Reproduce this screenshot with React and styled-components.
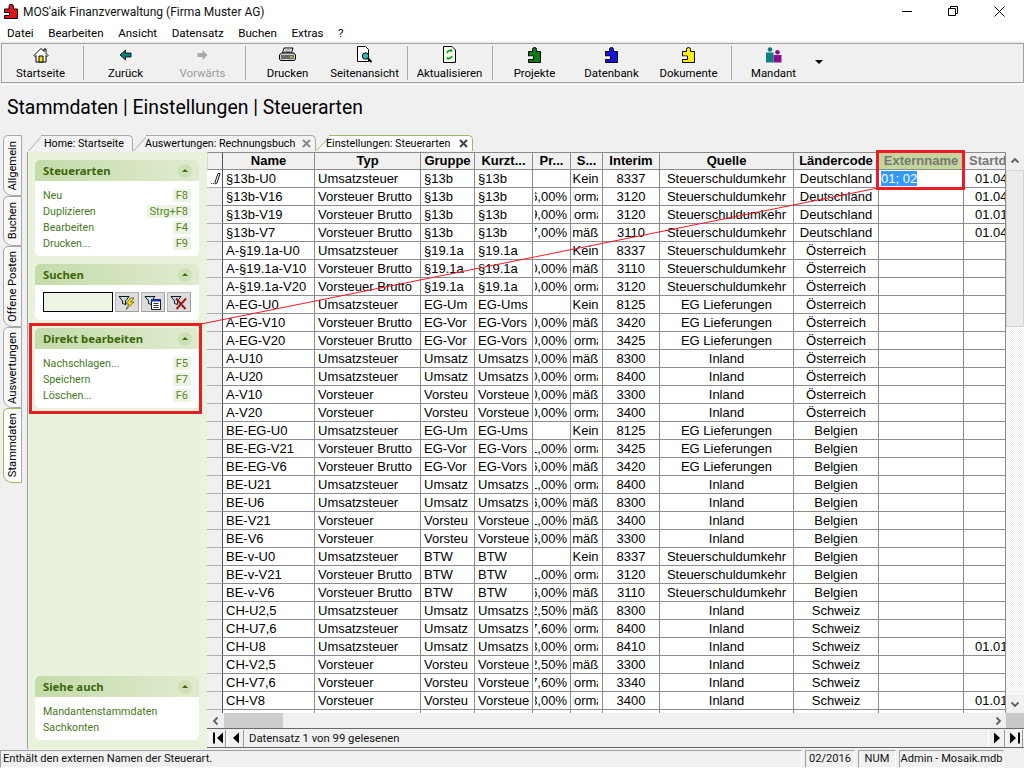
import React from 'react';
import styled, { createGlobalStyle } from 'styled-components';

const Global = createGlobalStyle`
  html, body { margin: 0; padding: 0; background: #f0f0f0; }
  * { box-sizing: border-box; }
`;

const UI = `Roboto, "Noto Sans", "Liberation Sans", sans-serif`;
const BOLD = `"Noto Sans", "Liberation Sans", sans-serif`;
const GRID = `"Liberation Sans", Arial, sans-serif`;
const RED = '#ed1c24';
const LINE = '#8c8c8c';

const Page = styled.div`
  position: relative; width: 1024px; height: 768px; overflow: hidden;
  display: flex; flex-direction: column; background: #f0f0f0;
  font: 11.3px ${UI}; color: #000;
`;
const TitleBar = styled.div`
  height: 22px; background: #fff; display: flex; align-items: center; padding: 0 2px 0 4px; flex: none;
`;
const TitleText = styled.span`
  margin-left: 5px; font-size: 12px; color: #111; flex: 1; padding-top: 2px;
`;
const WinButton = styled.span`
  width: 46px; height: 22px; display: flex; align-items: center; justify-content: center;
`;
const MenuBar = styled.div`
  height: 19px; background: #fff; display: flex; align-items: center; flex: none; padding: 3px 0 0 7px; gap: 14.5px;
`;
const MenuItem = styled.span`
  font-size: 11.6px; color: #000;
`;
const ToolWrap = styled.div`
  height: 44px; flex: none; padding: 2px 0 1px 1px; border-bottom: 1px solid #fff;
`;
const Toolbar = styled.div`
  height: 40px; border: 1px solid #a0a0a0; display: flex; align-items: stretch;
  padding: 1px 0 2px 0;
`;
const ToolButton = styled.div`
  width: 77px; display: flex; flex-direction: column; align-items: center; color: ${p => p.$off ? '#9a9a9a' : '#000'};
  font-size: 11.4px; line-height: 14px;
`;
const ToolIcon = styled.span`
  height: 20px; display: flex; align-items: center; justify-content: center; margin-bottom: 2px;
`;
const ToolSep = styled.span`
  width: 1px; background: #a8a8a8; margin: 1px 3px 0 4px;
`;
const DropArrow = styled.span`
  align-self: center; margin: 0 0 1px 3px; width: 0; height: 0;
  border-left: 4px solid transparent; border-right: 4px solid transparent; border-top: 4px solid #000;
`;
const Heading = styled.h1`
  height: 50px; flex: none; margin: 0; padding: 9px 0 0 7px;
  font: 400 19.4px/28px ${UI}; color: #000; white-space: pre;
`;
const Body = styled.div`
  flex: 1; display: flex; min-height: 0;
`;
const SideTabs = styled.div`
  width: 27px; flex: none; padding-left: 3px; display: flex; flex-direction: column;
`;
const SideTab = styled.div`
  height: ${p => p.$h}px; width: 19px; display: flex; align-items: center; justify-content: center;
  background: ${p => p.$active ? '#fff' : '#f7f7f7'};
  border: 1px solid ${p => p.$active ? '#9bbb59' : '#a8a8a8'};
  border-right-color: #a8a8a8;
  border-radius: 5px 0 0 9px;
`;
const SideLabel = styled.span`
  writing-mode: vertical-rl; transform: rotate(180deg); white-space: nowrap; font-size: 11.2px;
`;
const Main = styled.div`
  flex: 1; min-width: 0; display: flex; flex-direction: column;
`;
const TabRow = styled.div`
  height: 17px; flex: none; display: flex; padding-left: 1px; align-items: stretch;
`;
const DocTab = styled.div`
  position: relative; width: ${p => p.$w}px; height: 16px; padding-left: ${p => p.$pad}px; display: flex; align-items: center;
  font-size: 10.7px; color: #000; z-index: ${p => p.$active ? 2 : 1};
  &::before {
    content: ''; position: absolute; left: 0; top: 0; bottom: 0; width: 20px;
    background: ${p => p.$active ? '#fff' : '#f2f2f2'};
    border-left: 1px solid ${p => p.$active ? '#9bbb59' : '#a8a8a8'};
    transform: skewX(-42deg); transform-origin: bottom left; z-index: -1;
  }
  &::after {
    content: ''; position: absolute; left: 13px; right: 0; top: 0; bottom: 0;
    background: ${p => p.$active ? '#fff' : '#f2f2f2'};
    border-top: 1px solid ${p => p.$active ? '#9bbb59' : '#a8a8a8'};
    border-right: 1px solid ${p => p.$active ? '#9bbb59' : '#a8a8a8'};
    border-top-right-radius: 5px; z-index: -1;
  }
`;
const TabLabel = styled.span`
  white-space: nowrap; flex: 1;
`;
const TabClose = styled.span`
  width: 9px; margin-right: 5px; display: flex; align-items: center;
`;
const Panels = styled.div`
  flex: 1; display: flex; min-height: 0;
`;
const Sidebar = styled.aside`
  width: 180px; flex: none; background: #e9f2dd; border-left: 1px solid #a0a0a0;
  padding: 8px 8px 9px 7px; display: flex; flex-direction: column; gap: 8px;
`;
const Pane = styled.section`
  position: relative; background: #fff; border-radius: 5px; ${p => p.$bottom ? 'margin-top: auto;' : ''}
`;
const PaneHead = styled.div`
  height: 21px; border-radius: 5px 5px 0 0; padding: 0 7px 0 8px; display: flex; align-items: center; justify-content: space-between;
  background: linear-gradient(90deg, #c5dbaa, #dfebcf);
`;
const PaneTitle = styled.span`
  font: 700 11.3px ${BOLD}; color: #3b6609;
`;
const Collapse = styled.span`
  width: 14px; height: 14px; border-radius: 50%; background: #cfe0b8; display: flex; align-items: center; justify-content: center;
  &::before { content: ''; width: 0; height: 0; border-left: 3px solid transparent; border-right: 3px solid transparent; border-bottom: 3px solid #3b6609; }
`;
const PaneBody = styled.div`
  padding: 6px 8px 5px 8px;
`;
const ActionRow = styled.div`
  height: 16px; display: flex; align-items: center; justify-content: space-between; color: #47791d; font-size: 10.7px;
`;
const Shortcut = styled.span`
  background: #eef4e4; color: #55862c; height: 13px; line-height: 13px; padding: 0 3px; font-size: 11px; min-width: 18px; text-align: center;
`;
const SearchBody = styled.div`
  padding: 7px 8px 8px 8px; display: flex; gap: 2px;
`;
const SearchInput = styled.div`
  width: 70px; height: 20px; background: #eef4e4; border: 1px solid #000;
`;
const SearchButton = styled.span`
  width: 24px; height: 20px; background: #dcdcdc; border: 1px solid #b4b4b4; border-right-color: #a0a0a0; border-bottom-color: #a0a0a0;
  display: flex; align-items: center; justify-content: center;
`;
const Highlight = styled.div`
  position: absolute; border: 3px solid ${RED}; z-index: 5; pointer-events: none;
  left: ${p => p.$l}px; top: ${p => p.$t}px; width: ${p => p.$w}px; height: ${p => p.$h}px;
`;
const GridPanel = styled.div`
  flex: 1; min-width: 0; display: flex; flex-direction: column; background: #f0f0f0;
`;
const GridArea = styled.div`
  position: relative; height: 561px; flex: none; display: flex;
`;
const TableClip = styled.div`
  width: 799px; flex: none; overflow: hidden; background: #fff;
`;
const Table = styled.table`
  table-layout: fixed; border-collapse: separate; border-spacing: 0; width: 799px; font: 13px/17px ${GRID}; color: #000;
`;
const Col = styled.col`
  width: ${p => p.$w}px;
`;
const HeadCell = styled.th`
  height: 18px; padding: 0; background: ${p => p.$green ? '#c3d69b' : '#f0f0f0'}; font-weight: 700; font-size: 13px; line-height: 16px;
  border-right: 1px solid ${LINE}; border-bottom: 1px solid ${LINE}; border-top: 1px solid ${LINE};
  color: ${p => p.$muted ? '#787878' : '#000'};
  overflow: hidden; white-space: nowrap; text-align: ${p => p.$left ? 'left' : 'center'};
  padding-left: ${p => p.$left ? 5 : 0}px;
`;
const Corner = styled.th`
  padding: 0; height: 18px; line-height: 16px; background: #f0f0f0; border: 1px solid ${LINE}; border-left: 1px solid #d8d8d8; border-right-color: #555;
`;
const RowHead = styled.td`
  height: 18px; padding: 0 0 0 4px; background: ${p => p.$first ? '#fff' : '#f0f0f0'}; border-right: 1px solid #555; border-bottom: 1px solid #b0b0b0; line-height: 0;
`;
const Cell = styled.td`
  height: 18px; padding: ${p => p.$inset || '0'}; border-right: 1px solid ${LINE}; border-bottom: 1px solid ${LINE}; background: #fff; overflow: hidden;
`;
const CellText = styled.div`
  display: flex; height: 17px; white-space: nowrap; overflow: hidden; line-height: 17px;
  justify-content: ${p => p.$a === 'r' ? 'flex-end' : p.$a === 'c' ? 'center' : 'flex-start'};
  padding-left: ${p => p.$pl ?? (p.$a ? 0 : 3)}px;
`;
const Selected = styled.span`
  background: #3399ff; color: #fff; height: 15px; line-height: 15px; margin-top: 1px;
`;
const VScroll = styled.div`
  width: 18px; flex: none; display: flex; flex-direction: column;
  background: repeating-conic-gradient(#f0f0f0 0 25%, #fff 0 50%) 0 0 / 2px 2px;
`;
const ScrollBtn = styled.div`
  height: ${p => p.$h || 18}px; width: ${p => p.$w || 18}px; flex: none; background: #f0f0f0; display: flex; align-items: center; justify-content: center;
`;
const VThumb = styled.div`
  height: 157px; flex: none; background: #ececec; border: 1px solid #d4d4d4;
`;
const Spacer = styled.div`
  flex: 1;
`;
const HScroll = styled.div`
  height: 16px; flex: none; display: flex; align-items: stretch; background: #f0f0f0; border-bottom: 1px solid #696969;
`;
const HThumb = styled.div`
  width: 59px; background: #cdcdcd;
`;
const ScrollCorner = styled.div`
  width: 18px; background: #c8c8c8;
`;
const NavBar = styled.div`
  height: 19px; flex: none; display: flex; align-items: center; border-bottom: 1px solid #696969; padding-left: 2px; font-size: 11.3px;
`;
const NavButton = styled.span`
  width: 17px; height: 17px; display: flex; align-items: center; justify-content: center; margin-right: 1px;
  border-right: 1px solid #9a9a9a; border-left: 1px solid #fff;
`;
const NavText = styled.span`
  flex: 1; padding-left: 4px; color: #111;
`;
const StatusBar = styled.footer`
  height: 19px; flex: none; display: flex; gap: 3px; padding: 1px 20px 0 0; font-size: 11.1px;
`;
const StatusPanel = styled.div`
  width: ${p => p.$w ? p.$w + 'px' : 'auto'}; flex: ${p => p.$w ? 'none' : 1}; border-top: 1px solid #a0a0a0; border-left: 1px solid #a0a0a0;
  border-right: 1px solid #fff; border-bottom: 1px solid #fff; padding-left: ${p => p.$center ? 0 : 2}px; line-height: 16px; color: #111;
  text-align: ${p => p.$center ? 'center' : 'left'}; white-space: nowrap; overflow: hidden;
`;
const Overlay = styled.svg`
  position: absolute; left: 0; top: 0; width: 1024px; height: 768px; pointer-events: none; z-index: 4;
`;

const Puzzle = ({ color, dark = '#000' }) => (
  <svg width="13" height="16" viewBox="0 0 13 16">
    <path d="M4.500 4.500V2.500a2 2 0 0 1 4 0v2h4v11h-12v-3h5v-3.500h-5v-4.500z" fill={color} stroke={dark} strokeWidth="1" />
    <path d="M1 9.500h4v2h-4z" fill="#fff" />
  </svg>
);
const Logo = () => (
  <svg width="14" height="15" viewBox="0 0 14 15">
    <path d="M5 5V2.500a2.200 2.200 0 0 1 4.400 0V5h4v9.500H.5v-3h5V8.500h-5V5z" fill="#e5141b" stroke="#000" strokeWidth="1" />
    <path d="M1 9.500h3.500v1H1z" fill="#fff" />
  </svg>
);
const Home = () => (
  <svg width="16" height="16" viewBox="0 0 16 16">
    <path d="M1 8.500 8 1.500l3 3V2h2v4.500l2 2-1 1-1-1v6.500H3V8.500l-1 1z" fill="#fff" stroke="#000" />
    <path d="M6 9h4v6H6z" fill="#ffe800" stroke="#000" />
  </svg>
);
const ArrowL = ({ color = '#0a7a7a', stroke = '#000' }) => (
  <svg width="13" height="12" viewBox="0 0 13 12"><path d="M1 6 6.500 1v3H12v4H6.500v3z" fill={color} stroke={stroke} strokeWidth=".8" /></svg>
);
const ArrowR = () => (
  <svg width="11" height="12" viewBox="0 0 11 12"><path d="M10.500 6 5.500 1v3H.5v4h5v3z" fill="#a8a8a8" /></svg>
);
const Printer = () => (
  <svg width="17" height="15" viewBox="0 0 17 15">
    <path d="M5 1h9l-1.500 5h-9z" fill="#fff" stroke="#000" />
    <path d="M2.500 6h12.500l1.500 2v4l-1 1.500H1.500l-1-1.500V8z" fill="#d0d0d0" stroke="#000" />
    <path d="M2 9h13M2 11h13" stroke="#000" />
    <path d="M6 3h6M5.500 4.500h6" stroke="#555" strokeWidth=".7" />
    <path d="M11 9.500h3v1h-3z" fill="#ffe800" />
  </svg>
);
const Preview = () => (
  <svg width="17" height="17" viewBox="0 0 17 17">
    <path d="M1.500.5h8l3 3v12h-11z" fill="#fff" stroke="#000" />
    <circle cx="9.500" cy="10" r="3.200" fill="#33b5b5" stroke="#000" />
    <path d="M12 12.500 15.500 16" stroke="#000" strokeWidth="2" />
  </svg>
);
const Refresh = () => (
  <svg width="13" height="17" viewBox="0 0 13 17">
    <path d="M.5.5h8.500l3.500 3.500v12.500H.5z" fill="#f4f8ea" stroke="#000" />
    <path d="M4 7a3 3 0 0 1 5-1.500L7.500 3.500M9 10a3 3 0 0 1-5 1.500l1.500 2" fill="none" stroke="#0a9a2a" strokeWidth="1.600" />
  </svg>
);
const People = () => (
  <svg width="17" height="16" viewBox="0 0 17 16">
    <circle cx="5" cy="2.500" r="2.300" fill="#0a7f7f" />
    <path d="M1 5.500h7.500v10H1z" fill="#0a7f7f" />
    <circle cx="12.500" cy="5.200" r="2.300" fill="#8a0f8a" />
    <path d="M8.500 8h8v7.500h-8z" fill="#8a0f8a" />
  </svg>
);
const Funnel = () => <path d="M1 1.500h10L7.500 6v3.500l-3-1V6z" fill="#bfe0e0" stroke="#000" strokeWidth=".9" />;
const FilterBolt = () => (
  <svg width="18" height="15" viewBox="0 0 18 15"><Funnel /><path d="M12.500 3 8 9h3l-3 5.500L16 7h-3.500L16 3z" fill="#ffe800" stroke="#222" strokeWidth=".6" /></svg>
);
const FilterDoc = () => (
  <svg width="18" height="15" viewBox="0 0 18 15"><Funnel /><path d="M7.500 4.500h9v10h-9z" fill="#fff" stroke="#000" strokeWidth=".9" /><path d="M7.500 4.500h9v2h-9z" fill="#1c2fd0" /><path d="M9.500 8.500h5M9.500 10.500h5M9.500 12.500h5" stroke="#000" strokeWidth=".8" /></svg>
);
const FilterX = () => (
  <svg width="18" height="15" viewBox="0 0 18 15"><Funnel /><path d="M6 3.500 15.500 14M16 3.500 6.500 14" stroke="#a01a1a" strokeWidth="2" /></svg>
);
const Pencil = () => (
  <svg width="11" height="13" viewBox="0 0 11 13">
    <path d="M7 1.500h2l-3 9.500-1.700 1-.3-1.800z" fill="#fff" stroke="#000" strokeWidth=".9" />
    <path d="M0 11.500h1M2 11.500h1" stroke="#333" strokeWidth="1" />
  </svg>
);
const Chevron = ({ dir }) => {
  const d = { u: 'M1.500 6.500 5 3l3.500 3.500', d: 'M1.500 3.500 5 7l3.500-3.500', l: 'M6.500 1.500 3 5l3.500 3.500', r: 'M3.500 1.500 7 5 3.500 8.500' }[dir];
  return <svg width="10" height="10" viewBox="0 0 10 10"><path d={d} fill="none" stroke="#606060" strokeWidth="1.800" /></svg>;
};
const Close = ({ color }) => (
  <svg width="9" height="9" viewBox="0 0 9 9"><path d="M1 1l7 7M8 1 1 8" stroke={color} strokeWidth="2" /></svg>
);
const Nav = ({ dir, bar }) => (
  <svg width="12" height="12" viewBox="0 0 12 12">
    {dir === 'l' ? <path d={bar ? 'M5 6l6-5.500v11z' : 'M3 6l6-5.500v11z'} fill="#000" /> : <path d={bar ? 'M7 6 1 .5v11z' : 'M9 6 3 .5v11z'} fill="#000" />}
    {bar && <path d={dir === 'l' ? 'M1 .5h2v11H1z' : 'M9 .5h2v11H9z'} fill="#000" />}
  </svg>
);

const widths = [16, 92, 106, 54, 58, 38, 32, 57, 134, 85, 85, 42];
const heads = ['Name', 'Typ', 'Gruppe', 'Kurzt...', 'Pr...', 'S...', 'Interim', 'Quelle', 'Ländercode'];

const U = 'Umsatzsteuer', VB = 'Vorsteuer Brutto', V = 'Vorsteuer';
const SK = 'Steuerschuldumkehr', EG = 'EG Lieferungen', IN = 'Inland';
const DE = 'Deutschland', AT = 'Österreich', BE = 'Belgien', CH = 'Schweiz';
const N = 'Normal', E = 'Ermäßigt', K = 'Kein';

const rows = [
  ['§13b-U0', U, '§13b', '§13b', '', K, '8337', SK, DE, '01.04.2015'],
  ['§13b-V16', VB, '§13b', '§13b', '16,00%', N, '3120', SK, DE, '01.04.2015'],
  ['§13b-V19', VB, '§13b', '§13b', '19,00%', N, '3120', SK, DE, '01.01.2015'],
  ['§13b-V7', VB, '§13b', '§13b', '7,00%', E, '3110', SK, DE, '01.04.2015'],
  ['A-§19.1a-U0', U, '§19.1a', '§19.1a', '', K, '8337', SK, AT],
  ['A-§19.1a-V10', VB, '§19.1a', '§19.1a', '10,00%', E, '3110', SK, AT],
  ['A-§19.1a-V20', VB, '§19.1a', '§19.1a', '20,00%', N, '3120', SK, AT],
  ['A-EG-U0', U, 'EG-Um', 'EG-Ums', '', K, '8125', EG, AT],
  ['A-EG-V10', VB, 'EG-Vor', 'EG-Vors', '10,00%', E, '3420', EG, AT],
  ['A-EG-V20', VB, 'EG-Vor', 'EG-Vors', '20,00%', N, '3425', EG, AT],
  ['A-U10', U, 'Umsatz', 'Umsatzs', '10,00%', E, '8300', IN, AT],
  ['A-U20', U, 'Umsatz', 'Umsatzs', '20,00%', N, '8400', IN, AT],
  ['A-V10', V, 'Vorsteu', 'Vorsteue', '10,00%', E, '3300', IN, AT],
  ['A-V20', V, 'Vorsteu', 'Vorsteue', '20,00%', N, '3400', IN, AT],
  ['BE-EG-U0', U, 'EG-Um', 'EG-Ums', '', K, '8125', EG, BE],
  ['BE-EG-V21', VB, 'EG-Vor', 'EG-Vors', '21,00%', N, '3425', EG, BE],
  ['BE-EG-V6', VB, 'EG-Vor', 'EG-Vors', '6,00%', E, '3420', EG, BE],
  ['BE-U21', U, 'Umsatz', 'Umsatzs', '21,00%', N, '8400', IN, BE],
  ['BE-U6', U, 'Umsatz', 'Umsatzs', '6,00%', E, '8300', IN, BE],
  ['BE-V21', V, 'Vorsteu', 'Vorsteue', '21,00%', E, '3400', IN, BE],
  ['BE-V6', V, 'Vorsteu', 'Vorsteue', '6,00%', E, '3300', IN, BE],
  ['BE-v-U0', U, 'BTW', 'BTW', '', K, '8337', SK, BE],
  ['BE-v-V21', VB, 'BTW', 'BTW', '21,00%', N, '3120', SK, BE],
  ['BE-v-V6', VB, 'BTW', 'BTW', '6,00%', E, '3110', SK, BE],
  ['CH-U2,5', U, 'Umsatz', 'Umsatzs', '2,50%', E, '8300', IN, CH],
  ['CH-U7,6', U, 'Umsatz', 'Umsatzs', '7,60%', N, '8400', IN, CH],
  ['CH-U8', U, 'Umsatz', 'Umsatzs', '8,00%', N, '8410', IN, CH, '01.01.2011'],
  ['CH-V2,5', V, 'Vorsteu', 'Vorsteue', '2,50%', E, '3300', IN, CH],
  ['CH-V7,6', V, 'Vorsteu', 'Vorsteue', '7,60%', N, '3340', IN, CH],
  ['CH-V8', V, 'Vorsteu', 'Vorsteue', '8,00%', N, '3400', IN, CH, '01.01.2011'],
  ['', '', '', '', '', '', '', '', ''],
];

const menu = ['Datei', 'Bearbeiten', 'Ansicht', 'Datensatz', 'Buchen', 'Extras', '?'];

const Action = ({ label, keys }) => (
  <ActionRow><span>{label}</span>{keys && <Shortcut>{keys}</Shortcut>}</ActionRow>
);
const Tool = ({ label, off, children }) => (
  <ToolButton $off={off}><ToolIcon>{children}</ToolIcon><span>{label}</span></ToolButton>
);
const Head = ({ title }) => (
  <PaneHead><PaneTitle>{title}</PaneTitle><Collapse /></PaneHead>
);
const VTab = ({ h, active, children }) => (
  <SideTab $h={h} $active={active}><SideLabel>{children}</SideLabel></SideTab>
);

export default function App() {
  return (
    <Page>
      <Global />
      <TitleBar>
        <Logo />
        <TitleText>MOS'aik Finanzverwaltung (Firma Muster AG)</TitleText>
        <WinButton><svg width="10" height="10"><path d="M0 5.500h10" stroke="#000" /></svg></WinButton>
        <WinButton><svg width="10" height="10"><path d="M2.500 2.500V.5h7v7h-2M.5 2.500h7v7h-7z" fill="none" stroke="#000" /></svg></WinButton>
        <WinButton><svg width="11" height="11"><path d="M.5.5l10 10M10.500.5l-10 10" stroke="#000" /></svg></WinButton>
      </TitleBar>
      <MenuBar>
        {menu.map(m => <MenuItem key={m}>{m}</MenuItem>)}
      </MenuBar>
      <ToolWrap>
        <Toolbar>
          <Tool label="Startseite"><Home /></Tool>
          <ToolSep />
          <Tool label="Zurück"><ArrowL /></Tool>
          <Tool label="Vorwärts" off><ArrowR /></Tool>
          <ToolSep />
          <Tool label="Drucken"><Printer /></Tool>
          <Tool label="Seitenansicht"><Preview /></Tool>
          <ToolSep />
          <Tool label="Aktualisieren"><Refresh /></Tool>
          <ToolSep />
          <Tool label="Projekte"><Puzzle color="#0a7a14" /></Tool>
          <Tool label="Datenbank"><Puzzle color="#1414e0" /></Tool>
          <Tool label="Dokumente"><Puzzle color="#ffee10" /></Tool>
          <ToolSep />
          <Tool label="Mandant"><People /></Tool>
          <DropArrow />
        </Toolbar>
      </ToolWrap>
      <Heading>Stammdaten | Einstellungen | Steuerarten</Heading>
      <Body>
        <SideTabs>
          <VTab h={61}>Allgemein</VTab>
          <VTab h={50}>Buchen</VTab>
          <VTab h={81}>Offene Posten</VTab>
          <VTab h={81}>Auswertungen</VTab>
          <VTab h={75} active>Stammdaten</VTab>
        </SideTabs>
        <Main>
          <TabRow>
            <DocTab $w={105} $pad={16}><TabLabel>Home: Startseite</TabLabel></DocTab>
            <DocTab $w={183} $pad={12}><TabLabel>Auswertungen: Rechnungsbuch</TabLabel><TabClose><Close color="#8a8a8a" /></TabClose></DocTab>
            <DocTab $w={157} $pad={10} $active><TabLabel>Einstellungen: Steuerarten</TabLabel><TabClose><Close color="#444" /></TabClose></DocTab>
          </TabRow>
          <Panels>
            <Sidebar>
              <Pane>
                <Head title="Steuerarten" />
                <PaneBody>
                  <Action label="Neu" keys="F8" />
                  <Action label="Duplizieren" keys="Strg+F8" />
                  <Action label="Bearbeiten" keys="F4" />
                  <Action label="Drucken..." keys="F9" />
                </PaneBody>
              </Pane>
              <Pane>
                <Head title="Suchen" />
                <SearchBody>
                  <SearchInput />
                  <SearchButton><FilterBolt /></SearchButton>
                  <SearchButton><FilterDoc /></SearchButton>
                  <SearchButton><FilterX /></SearchButton>
                </SearchBody>
              </Pane>
              <Pane>
                <Head title="Direkt bearbeiten" />
                <PaneBody>
                  <Action label="Nachschlagen..." keys="F5" />
                  <Action label="Speichern" keys="F7" />
                  <Action label="Löschen..." keys="F6" />
                </PaneBody>
                <Highlight $l={-6} $t={-5} $w={173} $h={91} />
              </Pane>
              <Pane $bottom>
                <Head title="Siehe auch" />
                <PaneBody>
                  <Action label="Mandantenstammdaten" />
                  <Action label="Sachkonten" />
                </PaneBody>
              </Pane>
            </Sidebar>
            <GridPanel>
              <GridArea>
                <TableClip>
                  <Table>
                    <colgroup>{widths.map((w, i) => <Col key={i} $w={w} />)}</colgroup>
                    <thead>
                      <tr>
                        <Corner />
                        {heads.map(h => <HeadCell key={h}>{h}</HeadCell>)}
                        <HeadCell $green $muted>Externname</HeadCell>
                        <HeadCell $muted $left>Startdatum</HeadCell>
                      </tr>
                    </thead>
                    <tbody>
                      {rows.map((r, i) => (
                        <tr key={i}>
                          <RowHead $first={i === 0}>{i === 0 && <Pencil />}</RowHead>
                          <Cell><CellText>{r[0]}</CellText></Cell>
                          <Cell><CellText>{r[1]}</CellText></Cell>
                          <Cell><CellText>{r[2]}</CellText></Cell>
                          <Cell><CellText>{r[3]}</CellText></Cell>
                          <Cell $inset="0 3px 0 2px"><CellText $a="r">{r[4]}</CellText></Cell>
                          <Cell $inset="0 4px 0 2px"><CellText $a="c">{r[5]}</CellText></Cell>
                          <Cell><CellText $a="c">{r[6]}</CellText></Cell>
                          <Cell><CellText $a="c">{r[7]}</CellText></Cell>
                          <Cell><CellText $a="c">{r[8]}</CellText></Cell>
                          <Cell><CellText $pl={2}>{i === 0 && <Selected>01; 02</Selected>}</CellText></Cell>
                          <Cell><CellText $pl={11}>{r[9]}</CellText></Cell>
                        </tr>
                      ))}
                    </tbody>
                  </Table>
                </TableClip>
                <VScroll>
                  <ScrollBtn><Chevron dir="u" /></ScrollBtn>
                  <VThumb />
                  <Spacer />
                  <ScrollBtn><Chevron dir="d" /></ScrollBtn>
                </VScroll>
                <Highlight $l={669} $t={-2} $w={89} $h={40} />
              </GridArea>
              <HScroll>
                <ScrollBtn $h={15} $w={17}><Chevron dir="l" /></ScrollBtn>
                <HThumb />
                <Spacer />
                <ScrollBtn $h={15} $w={17}><Chevron dir="r" /></ScrollBtn>
                <ScrollCorner />
              </HScroll>
              <NavBar>
                <NavButton><Nav dir="l" bar /></NavButton>
                <NavButton><Nav dir="l" /></NavButton>
                <NavText>Datensatz 1 von 99 gelesenen</NavText>
                <NavButton><Nav dir="r" /></NavButton>
                <NavButton><Nav dir="r" bar /></NavButton>
              </NavBar>
            </GridPanel>
          </Panels>
        </Main>
      </Body>
      <StatusBar>
        <StatusPanel>Enthält den externen Namen der Steuerart.</StatusPanel>
        <StatusPanel $w={50} $center>02/2016</StatusPanel>
        <StatusPanel $w={38} $center>NUM</StatusPanel>
        <StatusPanel $w={105} $center>Admin - Mosaik.mdb</StatusPanel>
      </StatusBar>
      <Overlay viewBox="0 0 1024 768"><line x1="201" y1="324" x2="878" y2="188" stroke={RED} strokeWidth="1" /></Overlay>
    </Page>
  );
}
